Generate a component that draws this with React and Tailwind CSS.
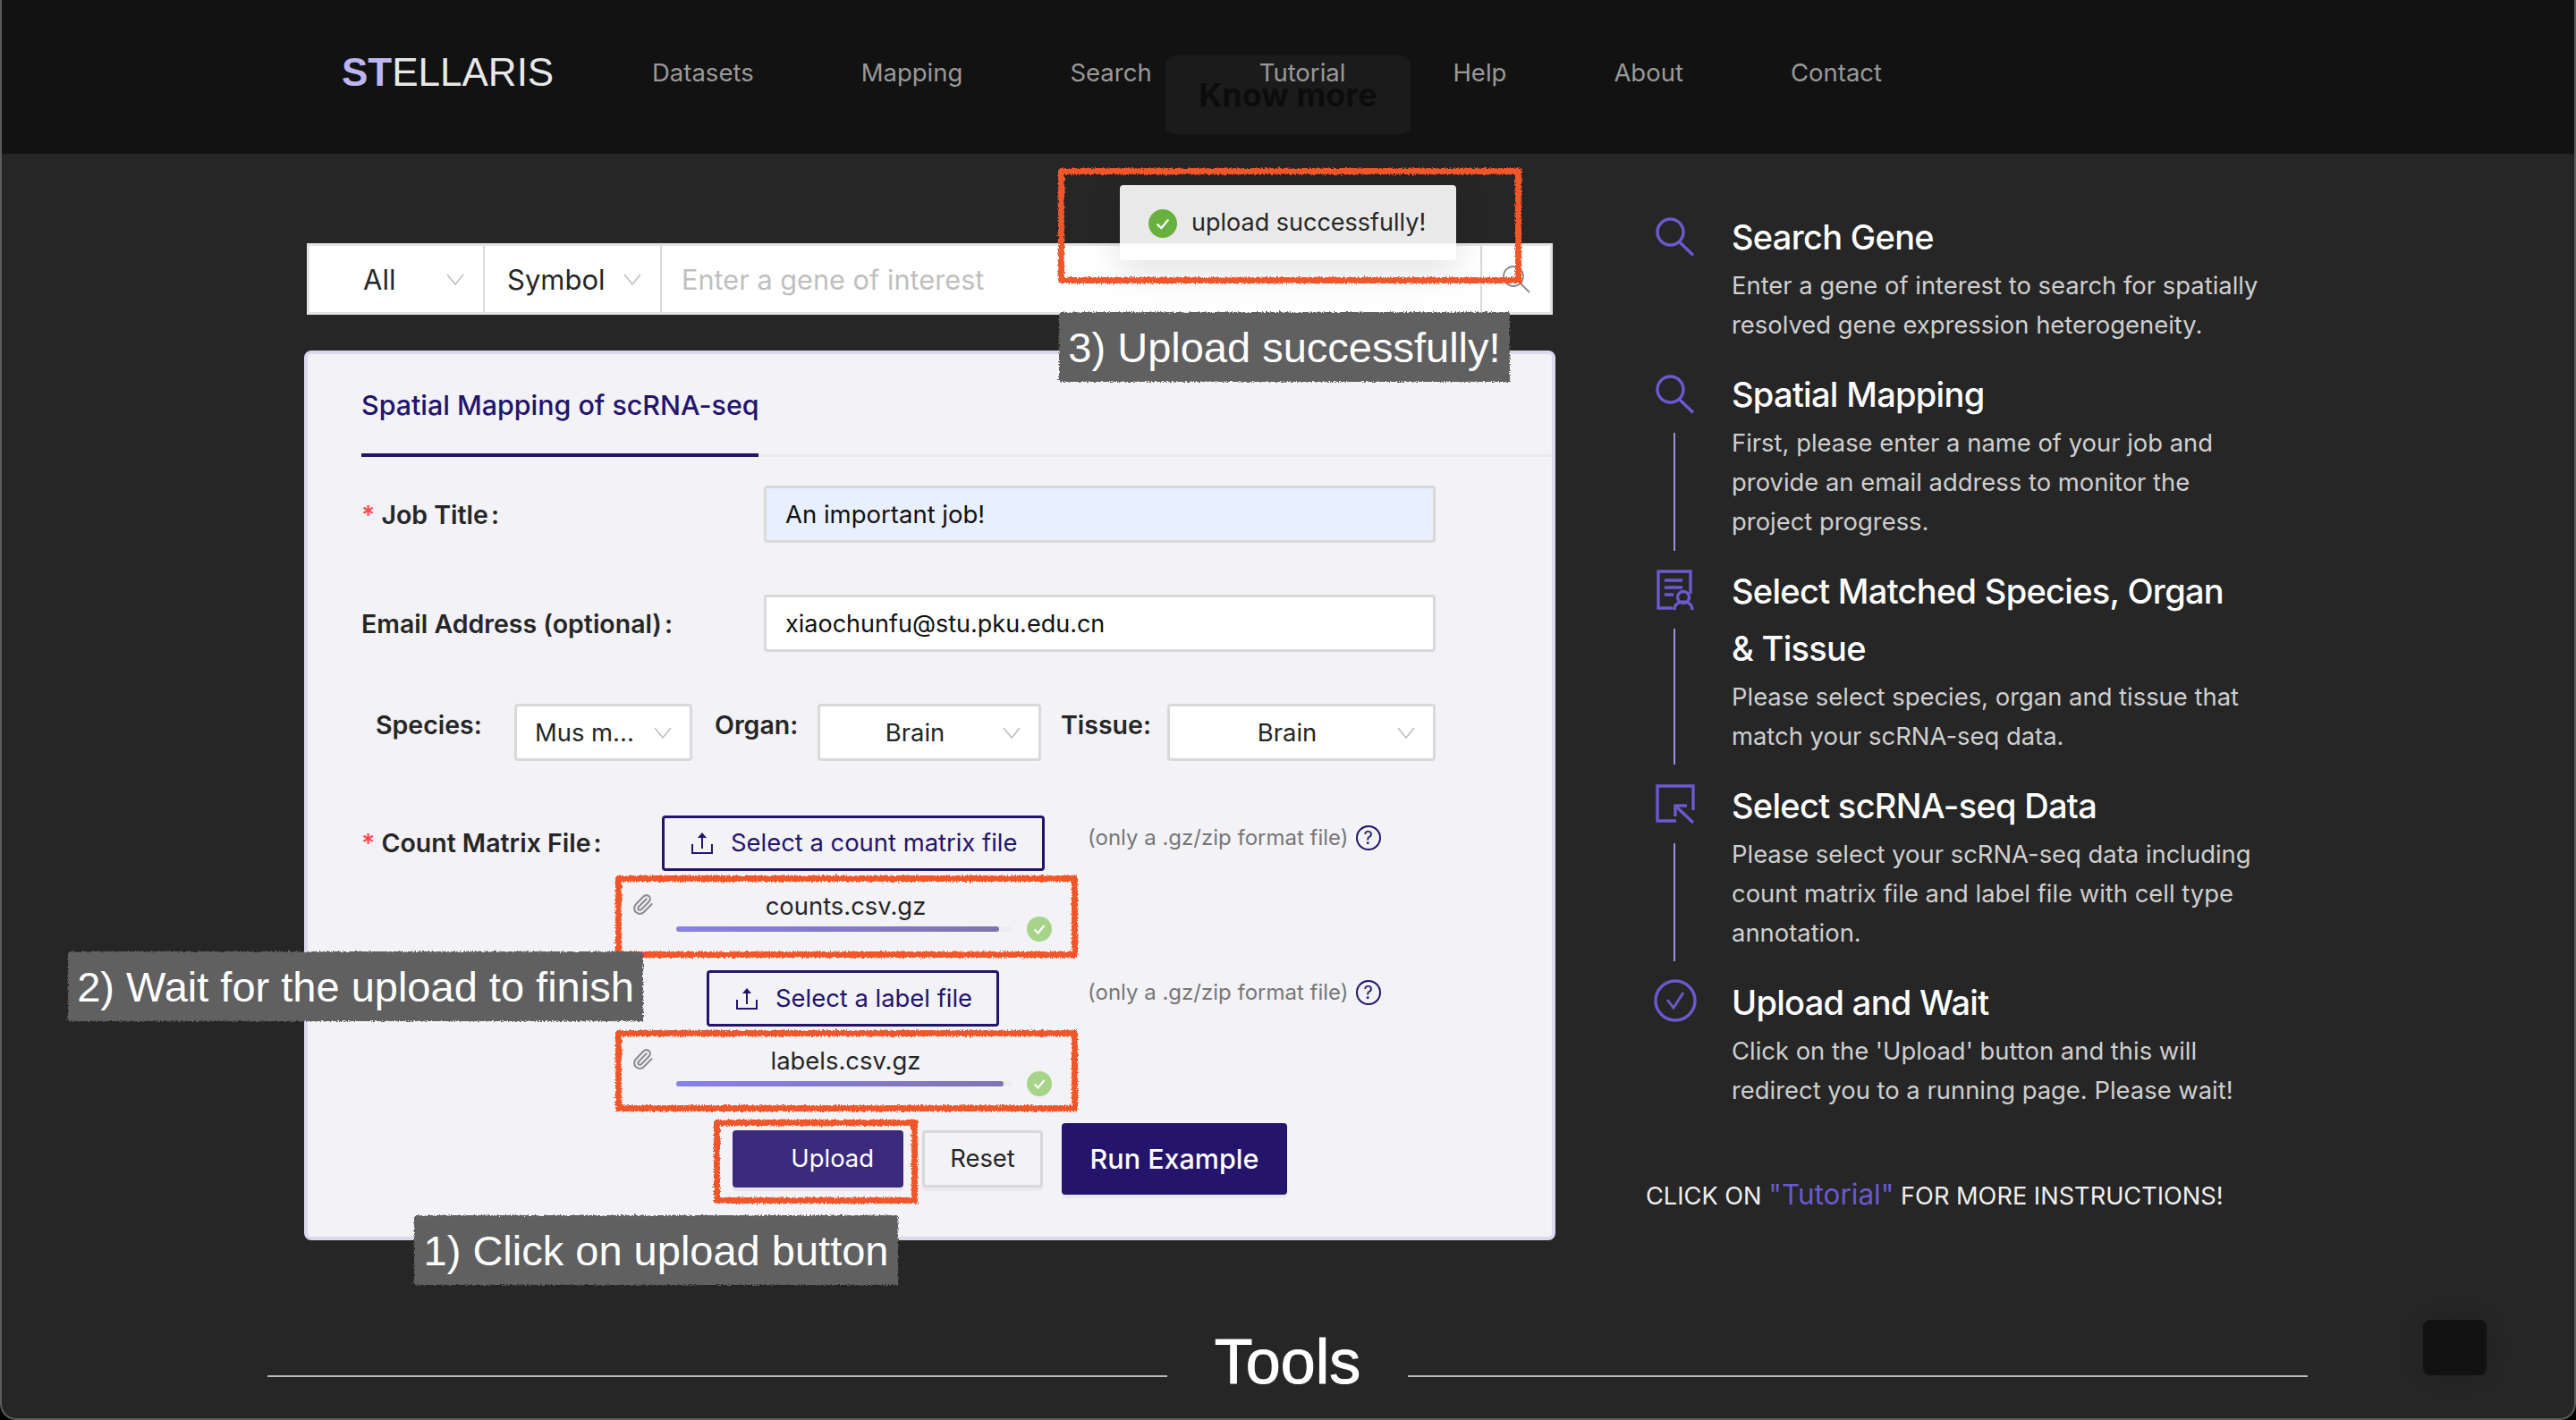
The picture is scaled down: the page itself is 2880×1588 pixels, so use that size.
import { Paperclip } from 'lucide-react'

const NAV_ITEMS = ['Datasets', 'Mapping', 'Search', 'Tutorial', 'Help', 'About', 'Contact']

const Caret = ({ className = '' }) => (
  <svg viewBox="0 0 20 13" className={`h-[13px] w-[20px] shrink-0 ${className}`} fill="none" stroke="#bfbfbf" strokeWidth="1.6">
    <path d="M1 1l9 11 9-11" />
  </svg>
)

const SearchIcon = () => (
  <svg viewBox="0 0 44 44" className="h-[44px] w-[44px]" fill="none" stroke="#6a5acd" strokeWidth="3.4">
    <circle cx="16.5" cy="16.5" r="14.5" />
    <path d="M26.5 27.5L42 42.5" />
  </svg>
)

const DocIcon = () => (
  <svg viewBox="0 0 44 48" className="h-[48px] w-[44px]" fill="none" stroke="#6a5acd" strokeWidth="3.4">
    <path d="M19 44H3V3h36v25" />
    <path d="M10 13h20M10 21h20M10 29h10" />
    <circle cx="31" cy="32" r="6.5" />
    <path d="M21 46c0-6 4.5-9 10-9s10 3 10 9" />
  </svg>
)

const SelectIcon = () => (
  <svg viewBox="0 0 44 44" className="h-[44px] w-[44px]" fill="none" stroke="#6a5acd" strokeWidth="3.4">
    <path d="M23 41H2V2h40v27" />
    <path d="M23 25l19 18M22 36V24h13" />
  </svg>
)

const CheckCircleIcon = () => (
  <svg viewBox="0 0 48 48" className="h-[48px] w-[48px]" fill="none" stroke="#6a5acd">
    <circle cx="24" cy="24" r="22" strokeWidth="3.4" />
    <path d="M15 23l7 9 11-17" strokeWidth="2.8" />
  </svg>
)

const UploadIcon = () => (
  <svg viewBox="0 0 24 24" className="h-[24px] w-[24px] shrink-0" fill="#24146b">
    <path d="M12 0l5 6h-4v12h-2V6H7z" />
    <path d="M0 13h2v9h20v-9h2v11H0z" />
  </svg>
)

const GreenCheck = ({ size = 'h-[28px] w-[28px]', fill = '#a8d48a' }) => (
  <svg viewBox="0 0 28 28" className={size}>
    <circle cx="14" cy="14" r="14" fill={fill} />
    <path d="M8.500 14.500l4 4 7-8.500" fill="none" stroke="#fff" strokeWidth="2" />
  </svg>
)

const Label = ({ required, children, className = '' }) => (
  <div className={`text-[28.500px] leading-[34px] font-semibold text-[#262626] ${className}`}>
    {required && <span className="mr-[7px] text-[#ff4d4f]">*</span>}
    {children}
  </div>
)

const Dropdown = ({ value, className = '', textClass = 'text-center pr-[12px]' }) => (
  <div className={`flex h-[64px] shrink-0 items-center rounded-[4px] border-[3px] border-[#d9d9d9] bg-white pl-[20px] pr-[20px] ${className}`}>
    <span className={`flex-1 pt-[2px] text-[27.400px] text-[#262626] ${textClass}`}>{value}</span>
    <Caret />
  </div>
)

const Hint = ({ className = '' }) => (
  <div className={`flex items-center gap-[8px] text-[24px] text-[#777] ${className}`}>
    <span>(only a .gz/zip format file)</span>
    <span className="flex h-[28px] w-[28px] items-center justify-center rounded-full border-2 border-[#24146b] text-[20px] leading-none text-[#24146b]">?</span>
  </div>
)

const FileRow = ({ name, barWidth, className = '' }) => (
  <div className={`relative ml-[303px] h-[50px] w-[470px] ${className}`}>
    <span className="absolute left-[-1px] top-[3px]"><Paperclip size={25} strokeWidth={2} color="#8c8c8c" /></span>
    <span className="absolute left-[49px] top-0 w-[379px] text-center text-[27.400px] leading-[34px] text-[#262626]">{name}</span>
    <div className="absolute left-[49px] top-[40px] h-[6px] w-[375px] rounded-full bg-[#ededed]">
      <div className={`h-full rounded-full bg-gradient-to-r from-[#8880e4] to-[#8074b0] ${barWidth}`} />
    </div>
    <span className="absolute left-[441px] top-[29px]"><GreenCheck /></span>
  </div>
)

const Step = ({ icon, line, title, children }) => (
  <div className="mb-[24px] flex">
    <div className="relative w-[96px] shrink-0">
      {icon}
      {line}
    </div>
    <div className="flex-1">
      <h3 className="text-[38px] leading-[64px] font-medium tracking-[-0.7px] text-white">{title}</h3>
      <p className="text-[27.400px] leading-[44px] text-[#cfcfcf]">{children}</p>
    </div>
  </div>
)

// Hand-drawn marks that sit on top of the screenshot
const RedBox = ({ className }) => (
  <div className={`pointer-events-none absolute border-[7px] border-[#f0562a] [filter:url(#rough)] ${className}`} />
)

const Note = ({ children, className }) => (
  <div className={`absolute ${className}`}>
    <div className="absolute inset-0 bg-[#616161] [filter:url(#rough)]" />
    <span className="absolute inset-0 flex items-center justify-center whitespace-nowrap pt-[3px] font-['Liberation_Sans',sans-serif] text-[47px] text-white">{children}</span>
  </div>
)

export default function App() {
  return (
    <div className="h-[1588px] w-[2880px] overflow-hidden bg-black font-['Inter',sans-serif]">
      <svg className="absolute h-0 w-0">
        <filter id="rough" x="-5%" y="-5%" width="110%" height="110%">
          <feTurbulence type="fractalNoise" baseFrequency="0.6" numOctaves="2" seed="4" />
          <feDisplacementMap in="SourceGraphic" scale="5" />
        </filter>
      </svg>

      <div className="relative h-full overflow-hidden rounded-b-[18px] bg-[#262626]">
        {/* Nav */}
        <header className="flex h-[172px] items-center bg-[#121212] pb-[10px] pl-[382px]">
          <div className="w-[347px] font-['Liberation_Sans',sans-serif] text-[44px] text-[#e8e8e8]">
            <span className="font-bold text-[#bdb5ee]">ST</span>ELLARIS
          </div>
          <nav className="relative z-10 flex gap-[120px] pt-[2px] text-[27.500px] text-[#999]">
            {NAV_ITEMS.map((item) => (
              <span key={item}>{item}</span>
            ))}
          </nav>
        </header>

        <div className="absolute left-[1303px] top-[62px] flex h-[88px] w-[274px] items-center justify-center rounded-[10px] bg-[#1b1b1b] text-[36px] font-bold text-[#0c0c0c]">
          Know more
        </div>

        <main className="flex pl-[340px] pt-[100px]">
          {/* Left column */}
          <div className="w-[1399px] shrink-0">
            <div className="mx-[3px] flex h-[80px] border-[3px] border-[#e3e3e3] bg-white">
              <div className="flex w-[196px] items-center justify-between border-r-2 border-[#d9d9d9] pl-[60px] pr-[21px]">
                <span className="pt-[2px] text-[31px] text-[#262626]">All</span>
                <Caret />
              </div>
              <div className="flex w-[198px] items-center justify-between border-r-2 border-[#d9d9d9] pl-[25px] pr-[21px]">
                <span className="pt-[2px] text-[31px] text-[#262626]">Symbol</span>
                <Caret />
              </div>
              <div className="flex flex-1 items-center border-r-2 border-[#d9d9d9] pl-[22px] pt-[2px] text-[30.700px] text-[#bfbfbf]">
                Enter a gene of interest
              </div>
              <div className="flex w-[76px] items-center justify-center">
                <svg viewBox="0 0 32 32" className="h-[32px] w-[32px]" fill="none" stroke="#8c8c8c" strokeWidth="1.800">
                  <circle cx="13" cy="13" r="11" />
                  <path d="M21 21l10 10" />
                </svg>
              </div>
            </div>

            <section className="mt-[40px] h-[995px] rounded-[8px] border-[4px] border-[#dcd8ee] bg-[#f2f2f7] pl-[60px]">
              {/* Tab */}
              <div className="h-[115px] border-b-[3px] border-[#ebebeb]">
                <div className="flex h-[115px] w-[444px] items-center border-b-[4px] border-[#24146b] pt-[4px] text-[30.400px] font-medium whitespace-nowrap text-[#24146b]">
                  Spatial Mapping of scRNA-seq
                </div>
              </div>

              <div className="mt-[32px] flex h-[64px] items-center">
                <Label required className="w-[450px] pt-[2px]">Job Title<span className="ml-[3px]">:</span></Label>
                <div className="flex h-[64px] w-[751px] items-center rounded-[4px] border-[3px] border-[#d9d9d9] bg-[#e8f0fe] pl-[21px] pt-[2px] text-[27.500px] text-[#111]">
                  An important job!
                </div>
              </div>

              <div className="mt-[58px] flex h-[64px] items-center">
                <Label className="w-[450px] pt-[2px]">Email Address (optional)<span className="ml-[3px]">:</span></Label>
                <div className="flex h-[64px] w-[751px] items-center rounded-[4px] border-[3px] border-[#d9d9d9] bg-white pl-[21px] pt-[2px] text-[27px] text-[#111]">
                  xiaochunfu@stu.pku.edu.cn
                </div>
              </div>

              <div className="mt-[58px] flex h-[64px]">
                <Label className="ml-[16px] w-[155px] pt-[7px]">Species:</Label>
                <Dropdown value="Mus m..." className="w-[199px]" textClass="text-left" />
                <Label className="ml-[25px] w-[115px] pt-[7px]">Organ:</Label>
                <Dropdown value="Brain" className="w-[250px]" />
                <Label className="ml-[22px] w-[119px] pt-[7px]">Tissue:</Label>
                <Dropdown value="Brain" className="w-[300px]" />
              </div>

              {/* Count matrix upload */}
              <div className="mt-[61px] flex">
                <Label required className="w-[336px] pt-[14px]">Count Matrix File<span className="ml-[3px]">:</span></Label>
                <div className="flex h-[62px] w-[428px] items-center gap-[20px] rounded-[4px] border-[3px] border-[#24146b] pl-[30px] text-[27.400px] text-[#24146b]">
                  <UploadIcon />
                  Select a count matrix file
                </div>
                <Hint className="ml-[48px] -mt-[12px]" />
              </div>
              <FileRow name="counts.csv.gz" barWidth="w-[361px]" className="mt-[22px]" />

              <div className="mt-[39px] flex">
                <div className="ml-[386px] flex h-[63px] w-[327px] items-center gap-[20px] rounded-[4px] border-[3px] border-[#24146b] pl-[30px] text-[27.400px] text-[#24146b]">
                  <UploadIcon />
                  Select a label file
                </div>
                <Hint className="ml-[99px] -mt-[14px]" />
              </div>
              <FileRow name="labels.csv.gz" barWidth="w-[366px]" className="mt-[21px]" />

              {/* Actions */}
              <div className="ml-[415px] mt-[37px] flex items-center gap-[21px]">
                <div className="flex h-[64px] w-[191px] items-center justify-end rounded-[4px] bg-[#3c2a7d] pr-[33px] text-[27.400px] text-white shadow-[0_4px_0_rgba(0,0,0,0.05)]">
                  Upload
                </div>
                <div className="flex h-[64px] w-[135px] items-center justify-center rounded-[4px] border-[3px] border-[#d9d9d9] text-[27.400px] text-[#262626] shadow-[0_4px_0_rgba(0,0,0,0.03)]">
                  Reset
                </div>
                <div className="flex h-[80px] w-[252px] items-center justify-center rounded-[4px] bg-[#24146b] text-[30.500px] font-medium text-white shadow-[0_4px_0_rgba(0,0,0,0.04)]">
                  Run Example
                </div>
              </div>
            </section>
          </div>

          {/* Right column */}
          <aside className="ml-[101px] -mt-[39px] w-[720px]">
            <Step icon={<span className="absolute left-[11px] top-[10px]"><SearchIcon /></span>} title="Search Gene">
              Enter a gene of interest to search for spatially<br />resolved gene expression heterogeneity.
            </Step>
            <Step
              icon={<span className="absolute left-[11px] top-[10px]"><SearchIcon /></span>}
              line={<div className="absolute left-[31px] top-[75px] h-[132px] w-[2px] bg-[#a08fe0]" />}
              title="Spatial Mapping"
            >
              First, please enter a name of your job and<br />provide an email address to monitor the<br />project progress.
            </Step>
            <Step
              icon={<span className="absolute left-[11px] top-[7px]"><DocIcon /></span>}
              line={<div className="absolute left-[31px] top-[74px] h-[152px] w-[2px] bg-[#a08fe0]" />}
              title={<>Select Matched Species, Organ<br />&amp; Tissue</>}
            >
              Please select species, organ and tissue that<br />match your scRNA-seq data.
            </Step>
            <Step
              icon={<span className="absolute left-[11px] top-[8px]"><SelectIcon /></span>}
              line={<div className="absolute left-[31px] top-[74px] h-[132px] w-[2px] bg-[#a08fe0]" />}
              title="Select scRNA-seq Data"
            >
              Please select your scRNA-seq data including<br />count matrix file and label file with cell type<br />annotation.
            </Step>
            <Step icon={<span className="absolute left-[9px] top-[6px]"><CheckCircleIcon /></span>} title="Upload and Wait">
              Click on the 'Upload' button and this will<br />redirect you to a running page. Please wait!
            </Step>
            <p className="mt-[73px] text-[27.200px] leading-[44px] whitespace-nowrap text-[#efefef]">
              CLICK ON <span className="text-[31.500px] text-[#6a5acd]">"Tutorial"</span> FOR MORE INSTRUCTIONS!
            </p>
          </aside>
        </main>

        {/* Tools heading */}
        <div className="absolute left-[299px] top-[1483px] flex w-[2281px] items-center">
          <div className="mt-[31px] h-[2px] flex-1 bg-[#bbbbbb]" />
          <h2 className="mx-[53px] font-['Liberation_Sans',sans-serif] text-[70px] leading-[80px] text-white [-webkit-text-stroke:1px_white]">Tools</h2>
          <div className="mt-[31px] h-[2px] flex-1 bg-[#bbbbbb]" />
        </div>

        <div className="absolute left-[2709px] top-[1476px] h-[62px] w-[71px] rounded-[8px] bg-[#121212] shadow-[0_0_24px_rgba(0,0,0,0.12)]" />

        {/* Toast */}
        <div className="absolute left-[1252px] top-[207px] flex h-[84px] w-[376px] items-center gap-[16px] rounded-[4px] bg-white/90 pl-[32px] pt-[1px] text-[27px] text-[#262626] shadow-[0_12px_40px_rgba(0,0,0,0.12)]">
          <GreenCheck size="h-[32px] w-[32px]" fill="#67b13c" />
          upload successfully!
        </div>

        {/* Annotations */}
        <RedBox className="left-[1183px] top-[188px] h-[129px] w-[518px]" />
        <RedBox className="left-[688px] top-[979px] h-[92px] w-[517px]" />
        <RedBox className="left-[688px] top-[1152px] h-[91px] w-[517px]" />
        <RedBox className="left-[798px] top-[1252px] h-[94px] w-[228px]" />

        <Note className="left-[1184px] top-[349px] h-[78px] w-[504px]">3) Upload successfully!</Note>
        <Note className="left-[76px] top-[1064px] h-[78px] w-[643px]">2) Wait for the upload to finish</Note>
        <Note className="left-[463px] top-[1359px] h-[78px] w-[541px]">1) Click on upload button</Note>

        {/* Window edge */}
        <div className="pointer-events-none absolute inset-0 rounded-b-[18px] border-x-2 border-b-2 border-[#5c5c5c]" />
      </div>
    </div>
  )
}
